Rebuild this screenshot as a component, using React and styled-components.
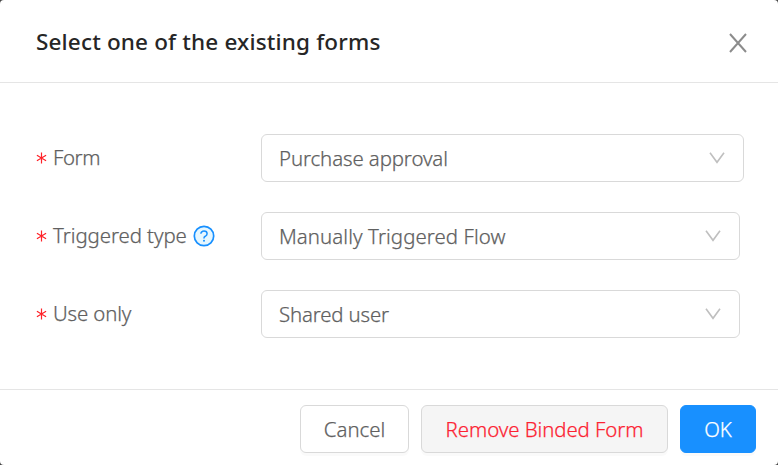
import React from "react";
import styled, { createGlobalStyle } from "styled-components";

const GlobalStyle = createGlobalStyle`
  * { box-sizing: border-box; }
  body {
    margin: 0;
    background: #454545;
    color: #606060;
    font: 300 20.4px/30px "Segoe UI", "Noto Sans", sans-serif;
  }
`;

const Dialog = styled.section`
  display: flex;
  flex-direction: column;
  height: 465px;
  overflow: hidden;
  border-radius: 4px;
  background: #fff;
`;

const Header = styled.header`
  display: flex;
  align-items: center;
  justify-content: space-between;
  height: 83px;
  padding: 0 30px 0 36px;
  border-bottom: 1px solid #e5e5e5;
`;

const Title = styled.h1`
  margin: 0;
  padding-top: 2px;
  color: #262626;
  font-size: 22.5px;
  font-weight: 500;
  letter-spacing: ${(p) => p.$tracking}px;
  white-space: nowrap;
`;

const CloseButton = styled.button`
  display: flex;
  margin-top: 3px;
  padding: 0;
  border: 0;
  background: none;
  color: #8c8c8c;
`;

const Body = styled.main`
  display: flex;
  flex-direction: column;
  gap: 30px;
  height: 306px;
  padding: 51px 34px 0 36px;
`;

const Row = styled.div`
  display: grid;
  grid-template-columns: 225px 1fr;
  height: 48px;
  padding-right: ${(p) => p.$inset}px;
`;

const Text = styled.span`
  letter-spacing: ${(p) => p.$tracking}px;
  white-space: nowrap;
  -webkit-text-stroke: 0.25px currentColor;
`;

const Label = styled.label`
  display: flex;
  align-items: center;
  height: 48px;

  ${Text} { padding-bottom: 2px; }
`;

const Required = styled.svg`
  flex: none;
  margin-right: 6px;
`;

const HelpIcon = styled.svg`
  flex: none;
  margin: 0 0 1px 6px;
`;

const Select = styled.div`
  display: flex;
  align-items: center;
  justify-content: space-between;
  padding: 0 18px 0 17px;
  border: 1px solid #d9d9d9;
  border-radius: 6px;
`;

const Footer = styled.footer`
  display: flex;
  justify-content: flex-end;
  gap: 12px;
  height: 76px;
  padding: 15px 22px 0;
  border-top: 1px solid #e5e5e5;
`;

const variants = {
  plain: { bg: "#fff", border: "#d9d9d9", color: "#606060" },
  danger: { bg: "#f5f5f5", border: "#d9d9d9", color: "#fc2232" },
  primary: { bg: "#1890ff", border: "#1890ff", color: "#fff" },
};

const Button = styled.button`
  display: flex;
  align-items: center;
  justify-content: center;
  width: ${(p) => p.$width}px;
  height: 48px;
  padding: 0 0 1px;
  border: 1px solid ${(p) => variants[p.$variant].border};
  border-radius: 6px;
  background: ${(p) => variants[p.$variant].bg};
  color: ${(p) => variants[p.$variant].color};
  font: inherit;
  box-shadow: 0 3px 0 rgba(0, 0, 0, 0.02);
`;

const Asterisk = () => (
  <Required width="11" height="12" viewBox="0 0 11 12" stroke="#ff2329" strokeWidth="1.2">
    <path d="M5.5 .5v11M.9 3.2l9.2 5.6M10.1 3.2L.9 8.8" />
  </Required>
);

const Chevron = () => (
  <svg width="16" height="12" viewBox="0 0 16 12" fill="none" stroke="#bfbfbf" strokeWidth="1.6">
    <path d="M1 .8l7 9.5 7-9.5" />
  </svg>
);

const Help = () => (
  <HelpIcon width="22" height="22" viewBox="0 0 22 22" fill="none" stroke="#1890ff">
    <circle cx="11" cy="11" r="9.7" fill="#e6f7ff" strokeWidth="1.7" />
    <path d="M7.9 8.8C7.9 7.2 9.2 6.1 11 6.1s3.1 1.1 3.1 2.7c0 1.3-.8 2-1.8 2.5-.9.4-1.3.9-1.3 1.7v.6" strokeWidth="1.5" />
    <circle cx="11" cy="15.7" r="1" fill="#1890ff" stroke="none" />
  </HelpIcon>
);

const rows = [
  { label: "Form", value: "Purchase approval", inset: 0, lt: -0.4, vt: -0.1 },
  { label: "Triggered type", value: "Manually Triggered Flow", inset: 4, lt: -0.06, vt: 0.08, help: true },
  { label: "Use only", value: "Shared user", inset: 4, lt: -0.13, vt: -0.15 },
];

export default function App() {
  return (
    <>
      <GlobalStyle />
      <Dialog role="dialog">
        <Header>
          <Title $tracking={0.16}>Select one of the existing forms</Title>
          <CloseButton aria-label="Close">
            <svg width="20" height="20" viewBox="0 0 20 20" stroke="currentColor" strokeWidth="2">
              <path d="M2 1l16 18M18 1L2 19" />
            </svg>
          </CloseButton>
        </Header>
        <Body>
          {rows.map((row) => (
            <Row key={row.label} $inset={row.inset}>
              <Label>
                <Asterisk />
                <Text $tracking={row.lt}>{row.label}</Text>
                {row.help && <Help />}
              </Label>
              <Select>
                <Text $tracking={row.vt}>{row.value}</Text>
                <Chevron />
              </Select>
            </Row>
          ))}
        </Body>
        <Footer>
          <Button $variant="plain" $width={109}><Text $tracking={0}>Cancel</Text></Button>
          <Button $variant="danger" $width={247}><Text $tracking={-0.06}>Remove Binded Form</Text></Button>
          <Button $variant="primary" $width={76}><Text $tracking={-0.2}>OK</Text></Button>
        </Footer>
      </Dialog>
    </>
  );
}
